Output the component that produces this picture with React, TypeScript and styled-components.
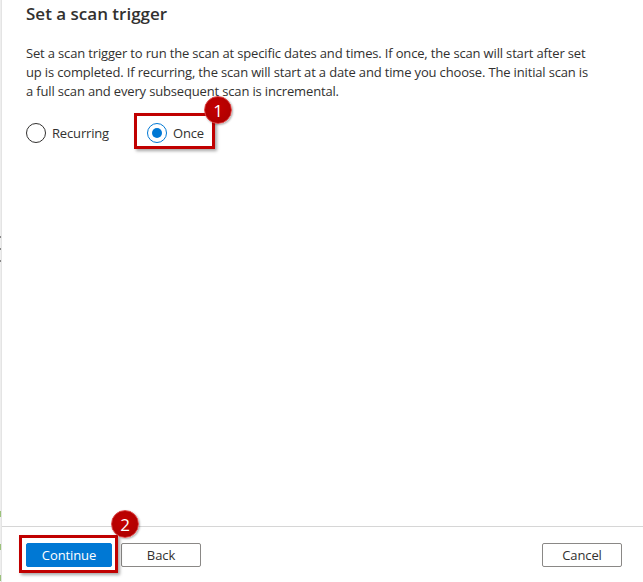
import React from "react";
import styled, { createGlobalStyle } from "styled-components";

const Global = createGlobalStyle`
  html, body { margin: 0; padding: 0; background: #fff; }
  body { font-family: "Open Sans", "Noto Sans", Arial, sans-serif; color: #323130; }
  * { box-sizing: border-box; }
`;

const Frame = styled.div`
  display: flex;
  width: 643px;
  height: 582px;
  overflow: hidden;
`;

const LeftStrip = styled.div`
  width: 2px;
  flex: none;
  background: #eeeeee;
  border-right: 1px solid #e4e4e4;
  display: flex;
  flex-direction: column;
`;

const StripMark = styled.div<{ $top: number; $color: string; $h: number }>`
  margin-top: ${(p) => p.$top}px;
  height: ${(p) => p.$h}px;
  background: ${(p) => p.$color};
`;

const Panel = styled.div`
  flex: 1;
  display: flex;
  flex-direction: column;
`;

const Content = styled.div`
  flex: 1;
  padding: 2px 24px 0 24px;
`;

const Title = styled.h2`
  margin: 0;
  font-size: 17px;
  font-weight: 600;
  line-height: 24px;
  color: #323130;
`;

const Description = styled.p`
  margin: 18px 0 0 0;
  font-size: 13px;
  letter-spacing: -0.16px;
  line-height: 19px;
  color: #323130;
`;

const RadioGroup = styled.div`
  display: flex;
  gap: 38px;
  margin-top: 22px;
`;

const Option = styled.label`
  position: relative;
  display: flex;
  align-items: center;
  gap: 6px;
  font-size: 13px;
  letter-spacing: -0.16px;
  color: #323130;
  height: 20px;
`;

const Circle = styled.span<{ $checked: boolean }>`
  width: 20px;
  height: 20px;
  border-radius: 50%;
  border: 1px solid ${(p) => (p.$checked ? "#0078d4" : "#323130")};
  display: flex;
  align-items: center;
  justify-content: center;
  &::after {
    content: "";
    width: 10px;
    height: 10px;
    border-radius: 50%;
    background: ${(p) => (p.$checked ? "#0078d4" : "transparent")};
  }
`;

const Highlight = styled.span<{ $inset: string }>`
  position: absolute;
  inset: ${(p) => p.$inset};
  border: 3px solid #c00000;
  box-shadow: 2px 2px 3px rgba(0, 0, 0, 0.35);
  pointer-events: none;
`;

const Badge = styled.span<{ $left: number; $top: number }>`
  position: absolute;
  left: ${(p) => p.$left}px;
  top: ${(p) => p.$top}px;
  width: 28px;
  height: 28px;
  border-radius: 50%;
  background: radial-gradient(circle at 45% 40%, #c40000 0%, #b00000 70%, #8e0000 100%);
  border: 1px solid #d44;
  color: #fff;
  font-family: "Open Sans", Arial, sans-serif;
  font-size: 17px;
  font-weight: 400;
  letter-spacing: 0;
  display: flex;
  align-items: center;
  justify-content: center;
  box-shadow: 1px 1px 2px rgba(0, 0, 0, 0.3);
`;

const Footer = styled.div`
  border-top: 1px solid #d6d6d6;
  height: 56px;
  flex: none;
  display: flex;
  align-items: flex-start;
  padding: 16px 21px 0 24px;
  gap: 9px;
`;

const ButtonWrap = styled.div`
  position: relative;
  display: flex;
`;

const Button = styled.button<{ $primary?: boolean }>`
  height: 24px;
  width: ${(p) => (p.$primary ? "86px" : "80px")};
  border-radius: 2px;
  font-family: "Open Sans", Arial, sans-serif;
  font-size: 13px;
  letter-spacing: -0.1px;
  padding: 0;
  border: 1px solid ${(p) => (p.$primary ? "#0078d4" : "#8a8886")};
  background: ${(p) => (p.$primary ? "#0078d4" : "#fff")};
  color: ${(p) => (p.$primary ? "#fff" : "#323130")};
`;

const Spacer = styled.div`
  flex: 1;
`;

export default function App() {
  return (
    <>
      <Global />
      <Frame>
        <LeftStrip>
          <StripMark $top={236} $color="#888" $h={2} />
          <StripMark $top={10} $color="#888" $h={2} />
          <StripMark $top={10} $color="#888" $h={2} />
          <StripMark $top={249} $color="#9bc27a" $h={6} />
          <StripMark $top={27} $color="#9bc27a" $h={6} />
          <StripMark $top={25} $color="#9bc27a" $h={6} />
        </LeftStrip>
        <Panel>
          <Content>
            <Title>Set a scan trigger</Title>
            <Description>
              Set a scan trigger to run the scan at specific dates and times. If once, the scan will start after set
              <br />
              up is completed. If recurring, the scan will start at a date and time you choose. The initial scan is
              <br />
              a full scan and every subsequent scan is incremental.
            </Description>
            <RadioGroup>
              <Option>
                <Circle $checked={false} />
                Recurring
              </Option>
              <Option>
                <Circle $checked={true} />
                Once
                <Highlight $inset="-10px -11px -6px -13px" />
                <Badge $left={57} $top={-27}>1</Badge>
              </Option>
            </RadioGroup>
          </Content>
          <Footer>
            <ButtonWrap>
              <Button $primary>Continue</Button>
              <Highlight $inset="-8px -6px -6px -7px" />
              <Badge $left={85} $top={-33}>2</Badge>
            </ButtonWrap>
            <Button>Back</Button>
            <Spacer />
            <Button>Cancel</Button>
          </Footer>
        </Panel>
      </Frame>
    </>
  );
}
